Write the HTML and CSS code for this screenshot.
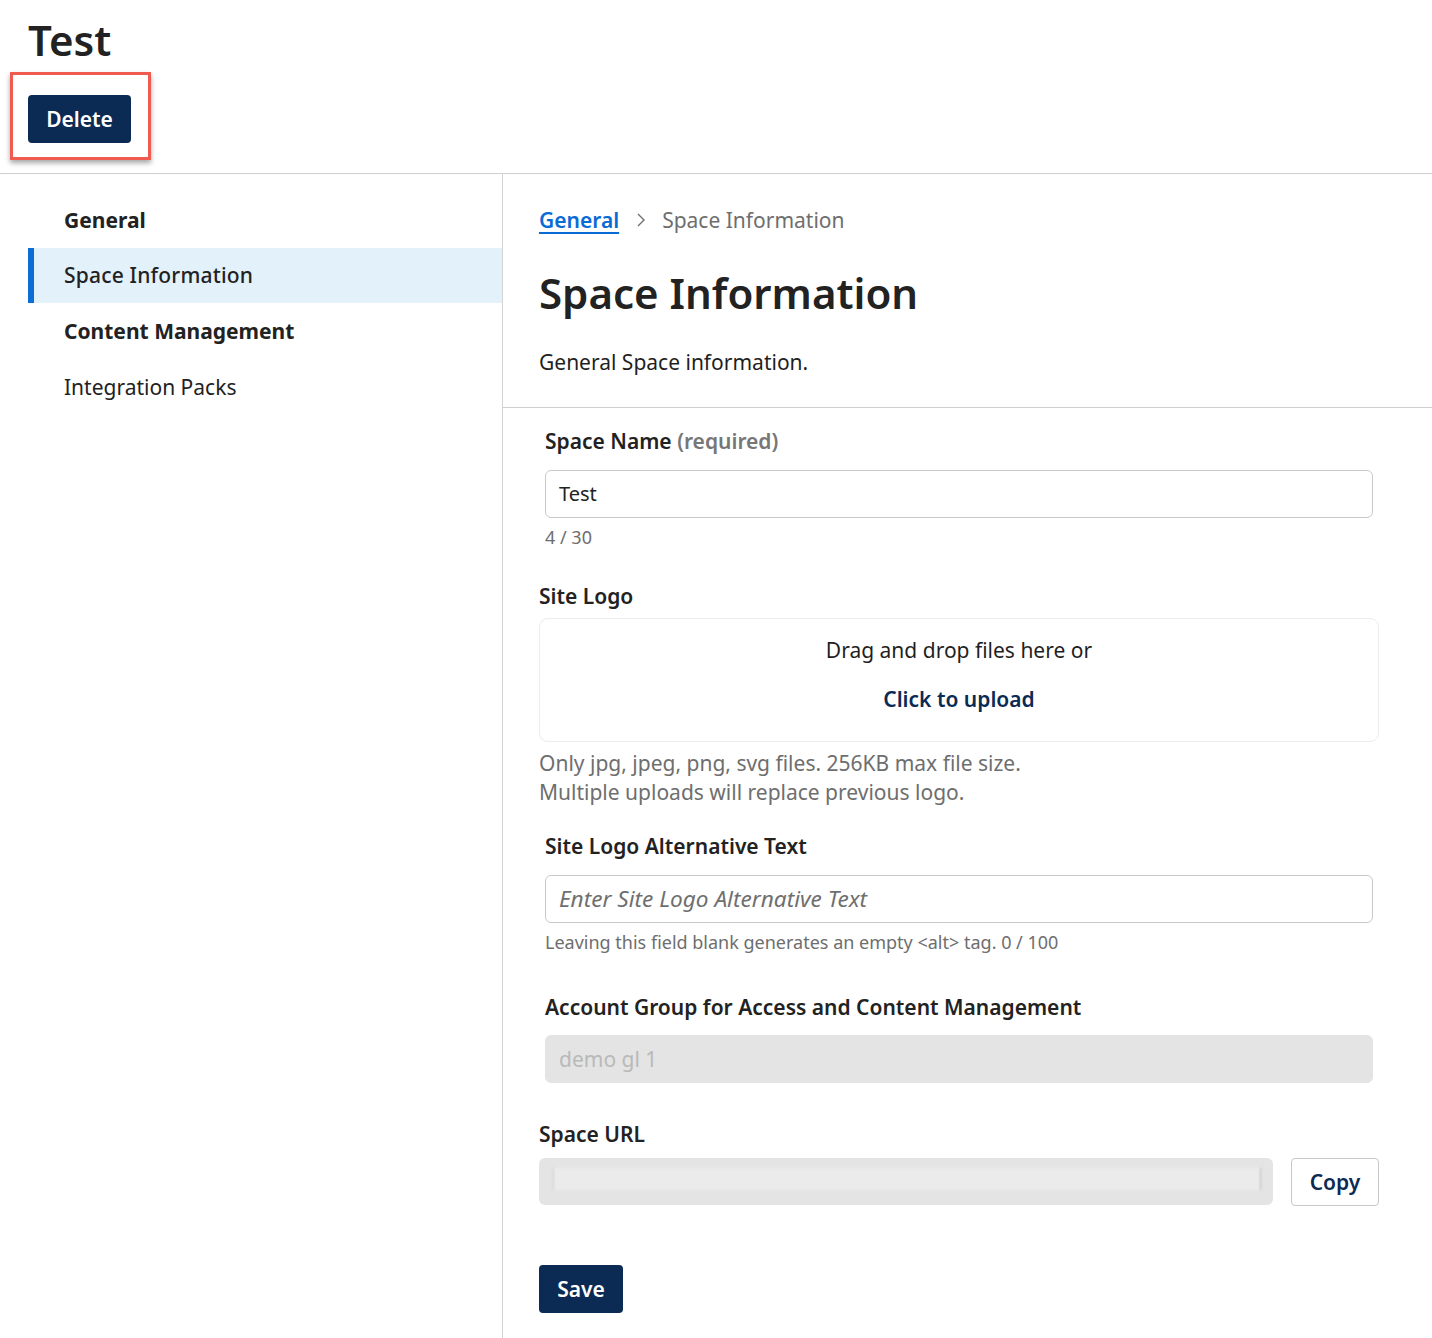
FILE: index.html
```html
<!DOCTYPE html>
<html lang="en">
<head>
<meta charset="utf-8">
<title>Test - Space Information</title>
<link rel="stylesheet" href="styles.css">
</head>
<body>
<header class="page-header">
  <h1 class="page-title">Test</h1>
  <div class="highlight">
    <button class="btn btn-primary">Delete</button>
  </div>
</header>
<div class="layout">
  <nav class="sidebar">
    <a class="nav-item nav-bold">General</a>
    <a class="nav-item nav-active">Space Information</a>
    <a class="nav-item nav-bold">Content Management</a>
    <a class="nav-item">Integration Packs</a>
  </nav>
  <main class="main">
    <section class="main-head">
      <div class="breadcrumb">
        <a class="crumb-link">General</a>
        <svg class="crumb-sep" width="10" height="16" viewBox="0 0 10 16"><polyline points="2,2 8,8 2,14" fill="none" stroke="#6f6f6f" stroke-width="1.4"/></svg>
        <span class="crumb-current">Space Information</span>
      </div>
      <h2 class="section-title">Space Information</h2>
      <p class="section-desc">General Space information.</p>
    </section>
    <section class="form">
      <div class="field inset">
        <label class="label">Space Name <span class="muted">(required)</span></label>
        <div class="input">Test</div>
        <div class="help">4 / 30</div>
      </div>

      <div class="field logo-field">
        <label class="label">Site Logo</label>
        <div class="dropzone">
          <div class="dz-text">Drag and drop files here or</div>
          <div class="dz-link">Click to upload</div>
        </div>
        <div class="hint">Only jpg, jpeg, png, svg files. 256KB max file size.<br>Multiple uploads will replace previous logo.</div>
      </div>

      <div class="field inset alt-field">
        <label class="label">Site Logo Alternative Text</label>
        <div class="input placeholder">Enter Site Logo Alternative Text</div>
        <div class="help">Leaving this field blank generates an empty &lt;alt&gt; tag. 0 / 100</div>
      </div>

      <div class="field inset group-field">
        <label class="label">Account Group for Access and Content Management</label>
        <div class="input disabled">demo gl 1</div>
      </div>

      <div class="field url-field">
        <label class="label">Space URL</label>
        <div class="url-row">
          <div class="url-box"><div class="url-blur"></div></div>
          <button class="btn btn-secondary">Copy</button>
        </div>
      </div>

      <button class="btn btn-primary save">Save</button>
    </section>
  </main>
</div>
</body>
</html>
```

FILE: styles.css
```css
* { box-sizing: border-box; }
html, body { margin: 0; padding: 0; background: #fff; }
body {
  font-family: "Noto Sans", "Open Sans", "DejaVu Sans", sans-serif;
  color: #1f1f1f;
  font-size: 21px;
}
.page-header {
  padding: 15px 0 13px 10px;
  border-bottom: 1px solid #cfcfcf;
}
.page-title {
  margin: 0 0 7px 18px;
  font-size: 42px;
  line-height: 50px;
  font-weight: 600;
  color: #222;
}
.highlight {
  display: inline-block;
  border: 3px solid #ef5b4f;
  padding: 20px 17px 14px 15px;
  box-shadow: 0 3px 5px rgba(0,0,0,0.35);
}
.btn {
  font-family: inherit;
  font-size: 21px;
  font-weight: 600;
  height: 48px;
  border-radius: 4px;
  cursor: pointer;
  display: block;
}
.btn-primary {
  background: #0b2a54;
  color: #fff;
  border: none;
  padding: 0;
}
.highlight .btn-primary { width: 103px; }
.btn-secondary {
  background: #fff;
  color: #0b2a54;
  border: 1px solid #c8c8c8;
  width: 88px;
  padding: 0;
  flex: none;
}
.layout { display: flex; }
.sidebar {
  width: 503px;
  flex: none;
  border-right: 1px solid #d3d3d3;
  padding-top: 18px;
  min-height: 1164px;
}
.nav-item {
  display: block;
  margin-left: 28px;
  padding-left: 36px;
  height: 56px;
  line-height: 56px;
  color: #222;
}
.nav-bold { font-weight: 700; }
.nav-active {
  background: #e3f1fb;
  border-left: 6px solid #0a6ed6;
  padding-left: 30px;
  height: 55px;
  line-height: 55px;
  font-weight: 500;
  letter-spacing: 0.2px;
}
.main { flex: 1; padding-top: 18px; }
.main-head {
  padding: 0 36px 31px;
  border-bottom: 1px solid #cfcfcf;
}
.breadcrumb {
  display: flex;
  align-items: center;
  height: 56px;
}
.crumb-link {
  color: #0b6bd6;
  font-weight: 600;
  text-decoration: underline;
  text-underline-offset: 4px;
  text-decoration-thickness: 2px;
}
.crumb-sep { margin: 0 16px 0 17px; }
.crumb-current { color: #6e6e6e; }
.section-title {
  margin: 17px 0 0;
  font-size: 42px;
  line-height: 56px;
  font-weight: 600;
  color: #222;
}
.section-desc {
  margin: 27px 0 0;
  line-height: 28px;
}
.form { padding: 19px 53px 40px 36px; }
.field { display: flex; flex-direction: column; }
.inset { padding: 0 6px; }
.label {
  font-weight: 600;
  line-height: 28px;
  color: #222;
}
.muted { color: #777; }
.input {
  margin-top: 15px;
  height: 48px;
  border: 1px solid #c9c9c9;
  border-radius: 6px;
  padding: 0 13px;
  line-height: 46px;
  font-size: 20px;
  color: #222;
}
.placeholder { font-style: italic; color: #6f6f6f; font-size: 22.6px; }
.disabled {
  margin-top: 14px;
  background: #e4e4e4;
  border-color: #e4e4e4;
  color: #b9b9b9;
  font-size: 21px;
}
.help {
  margin-top: 8px;
  font-size: 18px;
  line-height: 22px;
  color: #6e6e6e;
}
.logo-field { margin-top: 34px; }
.dropzone {
  margin-top: 8px;
  height: 124px;
  border: 1px solid #ececec;
  border-radius: 9px;
  text-align: center;
  padding-top: 17px;
}
.dz-text { line-height: 28px; }
.dz-link {
  margin-top: 21px;
  line-height: 28px;
  font-weight: 600;
  color: #0b2a54;
}
.hint {
  margin-top: 7px;
  line-height: 29px;
  color: #6e6e6e;
}
.alt-field { margin-top: 25px; }
.group-field { margin-top: 40px; }
.url-field { margin-top: 37px; }
.url-row {
  margin-top: 10px;
  display: flex;
  gap: 18px;
  align-items: flex-start;
}
.url-box {
  flex: 1;
  height: 47px;
  background: #e4e4e4;
  border-radius: 6px;
  padding: 10px 12px 0 14px;
  overflow: hidden;
}
.url-blur {
  height: 22px;
  background: #ebebeb;
  border-left: 1px solid #cfcfcf;
  border-right: 1px solid #b9b9b9;
  filter: blur(1px);
}
.save { margin-top: 59px; width: 84px; }
```
